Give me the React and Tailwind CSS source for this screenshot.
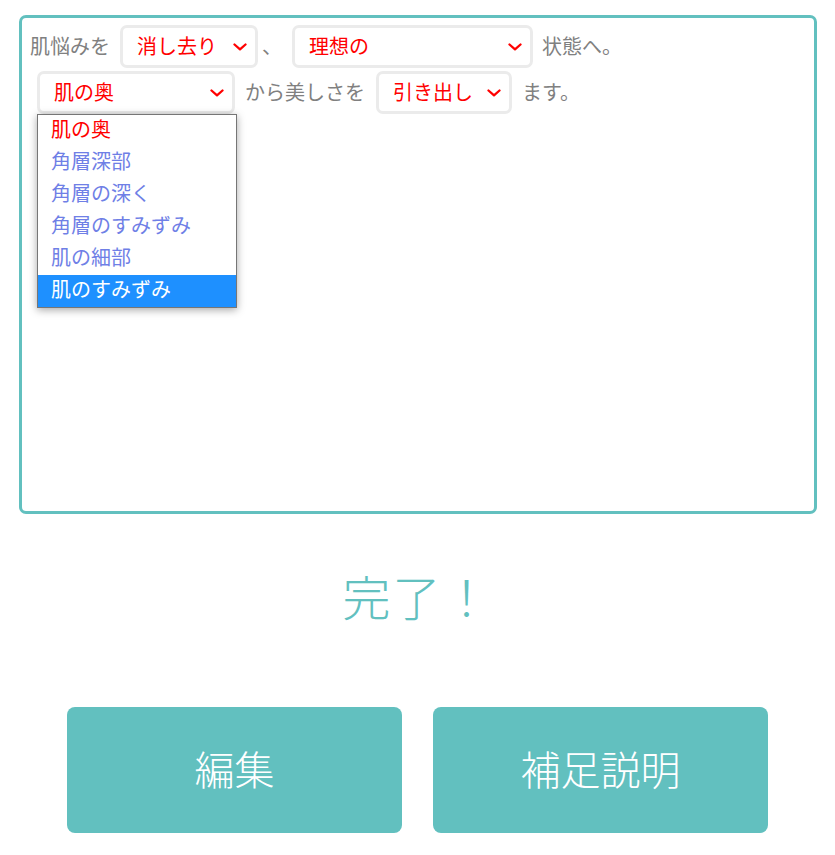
import { useState } from 'react'

const jp = { fontFamily: '"Noto Sans CJK JP", "Noto Sans", sans-serif' }

function Chevron() {
  return (
    <svg width="14" height="8" viewBox="0 0 14 8" className="shrink-0">
      <polyline points="1.5,1.5 7,6.3 12.5,1.5" fill="none" stroke="#ff0000" strokeWidth="2.3" strokeLinecap="round" strokeLinejoin="round" />
    </svg>
  )
}

function FakeSelect({ value, width, className = '' }) {
  return (
    <div
      className={`h-[43px] shrink-0 flex items-center justify-between bg-white border-[3px] border-[#ebebeb] rounded-[7px] pl-[14px] pr-[8px] text-[20px] text-[#ff0000] ${className}`}
      style={{ width }}
    >
      <span className="leading-none pb-[2px]">{value}</span>
      <Chevron />
    </div>
  )
}

const options = ['肌の奥', '角層深部', '角層の深く', '角層のすみずみ', '肌の細部', '肌のすみずみ']

export default function App() {
  const [hover] = useState(5)

  return (
    <div className="w-[835px] h-[855px] bg-white" style={jp}>
      <div className="ml-[19px] mt-[15px] w-[798px] h-[499px] border-[3px] border-[#62c0bf] rounded-[7px] px-[8px] pt-[7px]">
        {/* Row 1 */}
        <div className="flex items-center text-[20px] text-[#808080] leading-none">
          <span className="pb-[2px]">肌悩みを</span>
          <FakeSelect value="消し去り" width={138} className="ml-[10px]" />
          <span className="ml-[4px] pb-[2px]">、</span>
          <FakeSelect value="理想の" width={241} className="ml-[10px]" />
          <span className="ml-[9px] pb-[2px]">状態へ。</span>
        </div>

        {/* Row 2 */}
        <div className="flex items-center mt-[3px] ml-[7px] text-[20px] text-[#808080] leading-none">
          <div className="relative">
            <FakeSelect value="肌の奥" width={198} />
            {/* open dropdown */}
            <div className="absolute left-0 top-full w-[200px] bg-white border border-[#767676] shadow-[0_2px_8px_rgba(0,0,0,0.35)] z-10">
              {options.map((o, i) => (
                <div
                  key={o}
                  className={`h-[32px] leading-[28px] pl-[13px] text-[20px] ${
                    i === hover
                      ? 'bg-[#1e90ff] text-white'
                      : i === 0
                      ? 'text-[#ff0000]'
                      : 'text-[#6f7fe6]'
                  }`}
                >
                  {o}
                </div>
              ))}
            </div>
          </div>
          <span className="ml-[10px] pb-[2px]">から美しさを</span>
          <FakeSelect value="引き出し" width={136} className="ml-[11px]" />
          <span className="ml-[10px] pb-[2px]">ます。</span>
        </div>
      </div>

      <div className="mt-[57px] h-[48px] leading-[48px] text-center text-[48px] text-[#62c0bf] font-light tracking-[2px]">
        完了！
      </div>

      <div className="mt-[88px] flex justify-center gap-[31px]">
        <button className="w-[335px] h-[126px] rounded-[8px] bg-[#62c0bf] text-white text-[40px] font-light pb-[4px]">
          編集
        </button>
        <button className="w-[335px] h-[126px] rounded-[8px] bg-[#62c0bf] text-white text-[40px] font-light pb-[4px]">
          補足説明
        </button>
      </div>
    </div>
  )
}
